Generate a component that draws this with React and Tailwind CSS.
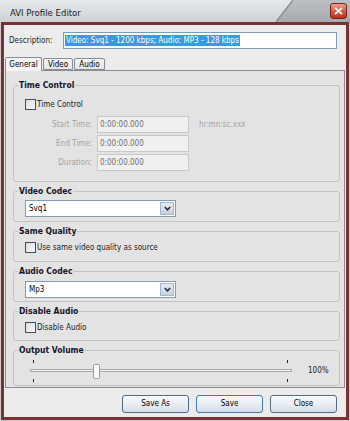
import React from 'react';

const font = "font-['DejaVu_Sans_Condensed','Liberation_Sans',Arial,sans-serif]";

function Checkbox({ label }) {
  return (
    <label className="flex items-center h-[11px] text-[8px] text-[#1b1b1b]">
      <span className="w-[11px] h-[11px] border border-[#34506e] bg-gradient-to-br from-[#dcdcdc] to-[#f8f8f8] shrink-0" />
      <span className="ml-[1px] leading-[11px]">{label}</span>
    </label>
  );
}

function Select({ value }) {
  return (
    <div className="flex ml-[11px] w-[151px] h-[17px] border border-[#7f9db9] bg-white">
      <span className="flex-1 pl-[3px] text-[8px] leading-[15px] text-black">{value}</span>
      <span className="w-[14px] m-[1px] flex items-center justify-center border border-[#a7b7cb] bg-gradient-to-b from-[#e6ebf2] to-[#c5d0de]">
        <svg width="7" height="5" viewBox="0 0 7 5">
          <path d="M0.8 1 L3.5 3.8 L6.2 1" fill="none" stroke="#1e2a3a" strokeWidth="1.5" />
        </svg>
      </span>
    </div>
  );
}

function Group({ title, className, children }) {
  return (
    <fieldset className={"border border-[#c4c4c4] rounded-[3px] " + className}>
      <legend className="ml-[4px] px-[1px] text-[8.5px] leading-[12px] font-bold text-[#14142a]">{title}</legend>
      {children}
    </fieldset>
  );
}

function TimeRow({ label, value, hint }) {
  return (
    <div className="flex items-center h-[17px]">
      <span className="w-[78px] text-right text-[8px] text-[#a3a3a3]">{label}</span>
      <span className="ml-[5px] w-[92px] h-[17px] border border-[#c9c9c9] bg-[#f0f0f0] pl-[2px] text-[8px] leading-[15px] text-[#6e6e6e]">{value}</span>
      {hint && <span className="ml-[10px] text-[8px] text-[#a3a3a3]">{hint}</span>}
    </div>
  );
}

function Button({ children, primary }) {
  return (
    <button className={"w-[67px] h-[18px] rounded-[3px] border text-[8px] text-black bg-gradient-to-b from-[#f7f9fb] via-[#e9eef3] to-[#d3dde7] " + (primary ? "border-[#3c7fb1]" : "border-[#4f6b88]")}>
      {children}
    </button>
  );
}

export default function App() {
  return (
    <div className={"w-[350px] h-[421px] flex flex-col bg-[#c9cdd2] overflow-hidden " + font}>
      {/* Title bar */}
      <div className="relative h-[22px] shrink-0">
        <svg className="absolute inset-0" width="350" height="22">
          <defs>
            <linearGradient id="tl" x1="0" y1="0" x2="0" y2="1">
              <stop offset="0" stopColor="#e6e9ec" />
              <stop offset="1" stopColor="#cdd1d5" />
            </linearGradient>
            <linearGradient id="tr" x1="0" y1="0" x2="0" y2="1">
              <stop offset="0" stopColor="#bcc0c4" />
              <stop offset="1" stopColor="#a6aaae" />
            </linearGradient>
          </defs>
          <rect width="350" height="22" fill="url(#tl)" />
          <polygon points="293,0 350,0 350,22 276,22" fill="url(#tr)" />
          <line x1="293" y1="0" x2="276" y2="22" stroke="#8c9094" strokeWidth="1.5" />
        </svg>
        <span className="relative block pl-[10px] pt-[7px] text-[9.5px] leading-[12px] text-[#1a1a1a]">AVI Profile Editor</span>
        <span className="absolute left-[330px] top-[3px] w-[17px] h-[16px] rounded-[3px] border border-[#7c2218] bg-gradient-to-b from-[#eba08f] via-[#d55a44] to-[#b9301e] flex items-center justify-center">
          <svg width="9" height="8" viewBox="0 0 9 8">
            <path d="M1 0.8 L8 7.2 M8 0.8 L1 7.2" stroke="white" strokeWidth="1.8" />
          </svg>
        </span>
      </div>

      {/* Window body */}
      <div className="flex-1 mx-[1px] mb-[1px] border-[3px] border-[#7b3131] bg-[#ececec] flex flex-col">
        {/* Description */}
        <div className="flex items-center h-[17px] mt-[7px] pl-[5px]">
          <span className="w-[54px] text-[8px] text-[#1b1b1b]">Description:</span>
          <div className="w-[274px] h-[17px] border border-[#7f9db9] bg-white flex items-center pl-[1px]">
            <span className="bg-[#3399ff] text-white text-[8px] leading-[11px] px-[1px]">Video: Svq1 - 1200 kbps; Audio: MP3 - 128 kbps</span>
          </div>
        </div>

        {/* Tabs */}
        <div className="flex items-end h-[13px] mt-[8px] pl-[1px] relative z-10">
          <span className="w-[37px] h-[14px] -mb-px border border-b-0 border-[#898c95] bg-[#f4f4f4] rounded-t-[2px] text-[8px] leading-[13px] text-center text-black">General</span>
          <span className="ml-[1px] w-[30px] h-[12px] border border-[#898c95] bg-gradient-to-b from-[#f6f6f6] to-[#e3e3e3] rounded-t-[2px] text-[8px] leading-[11px] text-center text-black">Video</span>
          <span className="ml-[1px] w-[31px] h-[12px] border border-[#898c95] bg-gradient-to-b from-[#f6f6f6] to-[#e3e3e3] rounded-t-[2px] text-[8px] leading-[11px] text-center text-black">Audio</span>
        </div>

        {/* Tab panel */}
        <div className="mx-[1px] border border-[#898c95] bg-[#e3e3e3] pt-[8px] pb-[1px] pl-[7px] pr-[4px] flex flex-col">
          <Group title="Time Control" className="h-[103px]">
            <div className="pl-[11px] mt-[8px]">
              <Checkbox label="Time Control" />
            </div>
            <div className="mt-[6px] flex flex-col gap-[2px]">
              <TimeRow label="Start Time:" value="0:00:00.000" hint="hr:mn:sc.xxx" />
              <TimeRow label="End Time:" value="0:00:00.000" />
              <TimeRow label="Duration:" value="0:00:00.000" />
            </div>
          </Group>

          <Group title="Video Codec" className="h-[37px] mt-[3px]">
            <div className="mt-[3px]">
              <Select value="Svq1" />
            </div>
          </Group>

          <Group title="Same Quality" className="h-[37px] mt-[3px]">
            <div className="pl-[11px] mt-[5px]">
              <Checkbox label="Use same video quality as source" />
            </div>
          </Group>

          <Group title="Audio Codec" className="h-[37px] mt-[3px]">
            <div className="mt-[4px]">
              <Select value="Mp3" />
            </div>
          </Group>

          <Group title="Disable Audio" className="h-[36px] mt-[3px]">
            <div className="pl-[11px] mt-[5px]">
              <Checkbox label="Disable Audio" />
            </div>
          </Group>

          <Group title="Output Volume" className="h-[42px] mt-[3px]">
            <div className="flex items-center h-[26px] mt-[2px] pl-[14px]">
              <svg width="270" height="26" viewBox="0 0 270 26">
                <line x1="5.5" y1="2" x2="5.5" y2="5" stroke="#222" />
                <line x1="259.5" y1="2" x2="259.5" y2="5" stroke="#222" />
                <line x1="5.5" y1="21" x2="5.5" y2="24" stroke="#222" />
                <line x1="259.5" y1="21" x2="259.5" y2="24" stroke="#222" />
                <rect x="2.5" y="11.5" width="261" height="2" fill="#f4f4f4" stroke="#a8a8a8" />
                <rect x="65.5" y="6.5" width="6" height="14" rx="1" fill="#fafafa" stroke="#9a9a9a" />
              </svg>
              <span className="ml-[10px] text-[8px] text-[#1b1b1b]">100%</span>
            </div>
          </Group>
        </div>

        {/* Buttons */}
        <div className="flex justify-end gap-[7px] pr-[9px] mt-[7px]">
          <Button>Save As</Button>
          <Button primary>Save</Button>
          <Button>Close</Button>
        </div>
      </div>
    </div>
  );
}
